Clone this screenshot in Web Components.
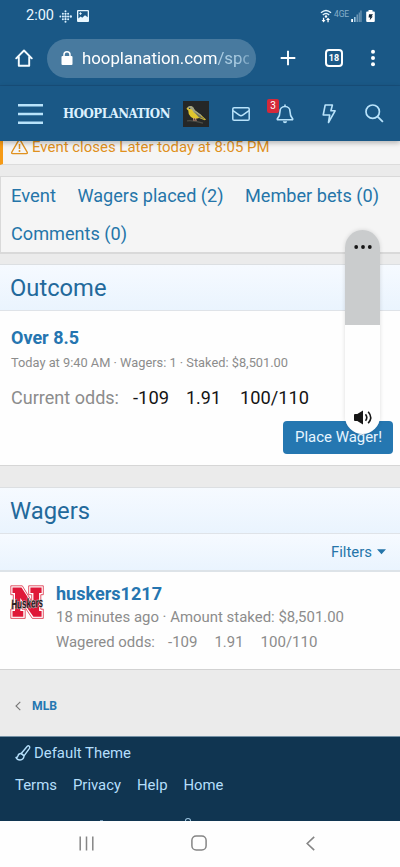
<!DOCTYPE html>
<html lang="en">
<head>
<meta charset="utf-8">
<title>Hooplanation</title>
<style>
html,body{margin:0;padding:0}
body{width:400px;height:867px;overflow:hidden;font-family:Roboto,"Liberation Sans",sans-serif;background:#ebebeb}
</style>
</head>
<body>
<hoop-screen></hoop-screen>
<script>
const ICONS = {
  fitbit: [13,13,'<g fill="#d9f0ff"><circle cx="6.500" cy="1.200" r="1"/><circle cx="6.500" cy="3.800" r="1.100"/><circle cx="6.500" cy="6.500" r="1.200"/><circle cx="6.500" cy="9.200" r="1.100"/><circle cx="6.500" cy="11.800" r="1"/><circle cx="3.900" cy="3.800" r="1"/><circle cx="3.900" cy="6.500" r="1.100"/><circle cx="3.900" cy="9.200" r="1"/><circle cx="9.100" cy="3.800" r="1"/><circle cx="9.100" cy="6.500" r="1.100"/><circle cx="9.100" cy="9.200" r="1"/><circle cx="1.300" cy="6.500" r=".9"/><circle cx="11.800" cy="6.500" r="1.200"/></g>'],
  photo: [12,12,'<path fill="#e9f8ff" fill-rule="evenodd" d="M1 0h10a1 1 0 0 1 1 1v10a1 1 0 0 1-1 1H1a1 1 0 0 1-1-1V1a1 1 0 0 1 1-1ZM1.300 1.300v7.200l2.400-2 1.500 1.200L8 5.200l2.700 2V1.300Z"/><path d="M3.500 2.300v2.600M2.200 3.600h2.600" stroke="#e9f8ff" stroke-width=".9"/>'],
  wifi: [12,14,'<g fill="none" stroke="#e4f6ff" stroke-width="1.400"><path d="M1 3.800q5-4.600 10 0M2.800 6q3.200-3 6.400 0"/></g><circle cx="6" cy="7.500" r="1.200" fill="#fff"/><path d="M3.600 13.500 1.600 11h1.300V8.800h1.300V11h1.300ZM8 8.500l2 2.500H8.700v2.300H7.400V11H6Z" fill="#fff"/>'],
  signal: [11,12,'<path d="M.2 9h1.800v3H.2Z" fill="#fff"/><path d="M3 7h1.600v5H3Z" fill="#9fc8e2"/><path d="M5.500 4.500h1.600V12H5.500ZM7.700 2.500h1.200V12H7.700ZM9.300.5h1.300V12H9.300Z" fill="#6e97b5"/>'],
  battery: [9,12,'<path fill="#fff" d="M2.500 0h4v1.500H8a.8.800 0 0 1 .8.800V11a1 1 0 0 1-1 1H1.200a1 1 0 0 1-1-1V2.300a.8.800 0 0 1 .8-.8h1.500Z"/><path d="M3 4.300h4L5.500 6.500h1.300L3.700 10.300 4.300 7.500H2.600Z" fill="#10273a"/>'],
  home: [18,18,'<path fill="none" stroke="#f4fbff" stroke-width="1.900" stroke-linejoin="round" stroke-linecap="round" d="M1.200 9.300 9 1.500l7.800 7.800M3.800 7.500v9.300h10.400V7.500"/>'],
  lock: [12,14,'<rect x=".5" y="5" width="11" height="9" rx="1" fill="#fff"/><path d="M3 6V3.800a3 3 0 0 1 6 0V6" fill="none" stroke="#fff" stroke-width="1.500"/>'],
  plus: [16,16,'<path d="M8 .7v14.600M.7 8h14.600" stroke="#fff" stroke-width="1.900"/>'],
  dots: [6,18,'<g fill="#fff"><circle cx="3" cy="2.700" r="2"/><circle cx="3" cy="9" r="2"/><circle cx="3" cy="15.300" r="2"/></g>'],
  bars: [25,22,'<path d="M0 2.300h25M0 11h25M0 19.700h25" stroke="#b9e3fb" stroke-width="2.600"/>'],
  bird: [26,26,'<rect width="26" height="26" fill="#252727"/><path d="M4 19.800q6-1 16 2.300" stroke="#4c4d47" stroke-width="1.300" fill="none"/><path d="M3.400 7.700 5 6q3-1.600 5 .3l1.700 3.200 6 4.300 5.300 4.800-1.200.7-5.700-2.200q-4.900 1.800-8.200-1Q4.900 13 5.300 9.500Z" fill="#dfc52e"/><path d="m4.600 6.200q3.100-2.200 5.600.1l1.800 3 7 5.100-2 .9-6.200-3.700-1.800-2.900q-1.400-1.100-3.500-.4Z" fill="#a2a385"/><path d="m10.300 10 6.500 4.400 5.600 4-6.400-2Z" fill="#6d6e5e"/><path d="m12.500 17 .6 3m-2.600-3 .6 3" stroke="#d99a80" stroke-width="1"/><circle cx="6.700" cy="7.300" r=".6" fill="#111"/>'],
  mail: [18,14,'<g fill="none" stroke="#b9e3fb" stroke-width="1.500"><rect x=".8" y=".8" width="16.400" height="12.400" rx="1.300"/><path d="m1 3.600 6.300 4.600q1.700 1.300 3.400 0L17 3.600"/></g>'],
  bell: [18,20,'<path d="M9 .5v2M9 2.500c-3.300 0-5 2.300-5 5 0 4-1.100 5.600-2.500 7.100-.5.600-.2 1.200.5 1.200h14c.7 0 1-.6.500-1.200C15.100 13.100 14 11.500 14 7.500c0-2.700-1.700-5-5-5Z" fill="none" stroke="#b9e3fb" stroke-width="1.600"/><path d="M6.800 17.300h4.400q-.3 2-2.200 2t-2.200-2Z" fill="#b9e3fb"/>'],
  bolt: [14,20,'<path d="M3.200 1h7.200L8.900 6.800h4.200L6.500 18.500 7.700 11H1.200Z" fill="none" stroke="#b9e3fb" stroke-width="1.600" stroke-linejoin="round"/>'],
  search: [19,19,'<circle cx="7.700" cy="7.700" r="6.700" fill="none" stroke="#b9e3fb" stroke-width="1.700"/><path d="m12.600 12.600 5.300 5.300" stroke="#b9e3fb" stroke-width="1.800"/>'],
  warn: [17,16,'<path d="M7.600 1.400.9 13q-.8 1.600.8 1.600h13.600q1.600 0 .8-1.600L9.400 1.400q-.9-1.400-1.800 0Z" fill="none" stroke="#e0911e" stroke-width="1.400"/><path d="M8.500 5v5" stroke="#e0911e" stroke-width="1.500"/><circle cx="8.500" cy="12" r="1" fill="#e0911e"/>'],
  more: [18,4,'<g fill="#161616"><circle cx="2.200" cy="2" r="1.900"/><circle cx="9" cy="2" r="1.900"/><circle cx="15.800" cy="2" r="1.900"/></g>'],
  sound: [18,15,'<path d="M0 4.500 1 4h2.300L9 .5v14L3.300 11H1l-1-.5Z" fill="#161616"/><path d="M11.500 4.200q2.600 3.300 0 6.600M14.200 1.700q5 5.800 0 11.600" fill="none" stroke="#161616" stroke-width="1.600"/>'],
  caret: [9,6,'<path d="M0 .3h9L4.500 5.300Z" fill="#2575a9"/>'],
  huskers: [34,34,'<path d="M.8.800h11.500l9.400 15.500V9.700h-3V.8h14.600v8.900h-2.500v14.500h2.500v9.200h-11L12 18v6.200h3.200v9.200H.8v-9.200h2.500V9.700H.8Z" fill="#fff" stroke="#db2940" stroke-width=".8"/><path d="M2.500 2.500h9L23.400 21V8h-3V2.500h11.200V8h-2.500v18h2.500v5.700h-8.200L10.300 13v13h3v5.700H2.500V26H5V8H2.500Z" fill="#df1838"/><text x="1" y="23" font-family="Liberation Sans" font-style="italic" font-weight="700" font-size="13.500" textLength="32" lengthAdjust="spacingAndGlyphs" fill="#231a1b" stroke="#d9cfd0" stroke-width=".9" paint-order="stroke" transform="rotate(-4 17 18)">Huskers</text>'],
  chevron: [6,10,'<path d="M5.300.8 1 5l4.300 4.200" fill="none" stroke="#777" stroke-width="1.100"/>'],
  brush: [16,16,'<g fill="none" stroke="#b5dffb" stroke-width="1.400" stroke-linejoin="round"><path d="M6.200 8.500 12.300 1.300q1-.9 2 0 .9.900.2 2L9 10.800Z"/><path d="M6.200 8.500q-2.700-.1-3.200 2.300-.3 1.700-2 1.700 1.100 2.500 4 2.500 3.800-.2 4-4.200Z"/></g>'],
  recents: [15,15,'<path d="M1.200.5v14M7.500.5v14M13.800.5v14" stroke="#858585" stroke-width="1.500"/>'],
  square: [16,16,'<rect x=".9" y=".9" width="14.200" height="14.200" rx="4.300" fill="none" stroke="#858585" stroke-width="1.500"/>'],
  back: [9,15,'<path d="M8.200.8 1.200 7.500l7 6.700" fill="none" stroke="#858585" stroke-width="1.600"/>']
};
function define(name, css, html) {
  const template = document.createElement('template');
  template.innerHTML = `<style>:host{display:block;box-sizing:border-box}*{box-sizing:border-box}${css}</style>${html}`;
  customElements.define(name, class extends HTMLElement {
    constructor() {
      super();
      this.attachShadow({mode: 'open'}).append(template.content.cloneNode(true));
    }
  });
}
customElements.define('ui-icon', class extends HTMLElement {
  connectedCallback() {
    if (this.shadowRoot) return;
    const [w, h, body] = ICONS[this.getAttribute('name')];
    this.attachShadow({mode: 'open'}).innerHTML = `<style>:host{display:block;flex:none;width:${w}px;height:${h}px}svg{display:block;overflow:visible}</style><svg width="${w}" height="${h}" viewBox="0 0 ${w} ${h}" aria-hidden="true">${body}</svg>`;
  }
});
/* Single line of text that spans the given width: the size adapts a little, the tracking does the rest. */
customElements.define('ui-line', class extends HTMLElement {
  connectedCallback() {
    if (this.shadowRoot) return;
    this.attachShadow({mode: 'open'}).innerHTML = '<style>:host{display:block;flex:none;white-space:nowrap}span{display:inline-block;vertical-align:top}</style><span><slot></slot></span>';
    const span = this.shadowRoot.querySelector('span');
    const w = +this.getAttribute('w');
    this.style.width = w + 'px';
    const ratio = Math.min(1.06, Math.max(.94, w / span.getBoundingClientRect().width));
    span.style.fontSize = (parseFloat(getComputedStyle(this).fontSize) * ratio).toFixed(2) + 'px';
    span.style.letterSpacing = ((w - span.getBoundingClientRect().width) / this.textContent.length).toFixed(3) + 'px';
  }
});
define('status-bar', `:host{height:32px;display:flex;align-items:center;padding-left:26px;color:#e9f7ff;font-size:14.600px}
.net{font-size:9px;color:#86afca;margin-left:2px;height:14px;line-height:10px}`,
 `<ui-line w="28">2:00</ui-line><ui-icon name="fitbit" style="margin-left:5px"></ui-icon><ui-icon name="photo" style="margin-left:5px"></ui-icon>
 <ui-icon name="wifi" style="margin-left:231px"></ui-icon><ui-line class="net" w="15">4GE</ui-line><ui-icon name="signal" style="margin-left:2px"></ui-icon><ui-icon name="battery" style="margin-left:4px"></ui-icon>`);
define('browser-bar', `:host{height:54px;display:flex;align-items:center;padding:0 0 1px 15px;color:#fff;border-bottom:1px solid #174f7b}
.url{width:209px;height:39px;margin-left:14px;border-radius:20px;background:#487a9f;display:flex;align-items:center;padding-left:14px;font-size:17px}
.clip{width:167px;margin-left:9px;overflow:hidden;-webkit-mask-image:linear-gradient(90deg,#000 155px,#0006 168px)}
.clip span{color:#a9cbe1}
.tabs{width:18px;height:18px;margin-left:29px;border:2px solid #fff;border-radius:4px;font:700 9px/14px Roboto;text-align:center}`,
 `<ui-icon name="home"></ui-icon><div class="url"><ui-icon name="lock"></ui-icon><div class="clip"><ui-line w="170">hooplanation.com<span>/spo</span></ui-line></div></div>
 <ui-icon name="plus" style="margin-left:24px"></ui-icon><div class="tabs">18</div><ui-icon name="dots" style="margin-left:27px"></ui-icon>`);
define('site-nav', `:host{height:55px;display:flex;align-items:center;padding-left:18px;position:relative;z-index:1;background:#1a5886;box-shadow:0 2px 5px #0004}
.logo{font:700 14px "DejaVu Serif Condensed","DejaVu Serif",serif;font-stretch:condensed;color:#dcf1ff;margin-left:20px}
.bell{position:relative;margin-left:26px}
.badge{position:absolute;left:-9px;top:-5px;width:12px;height:14px;background:#d4293a;color:#fff;border-radius:2px;font-size:10px;line-height:14px;text-align:center}`,
 `<ui-icon name="bars"></ui-icon><ui-line class="logo" w="107">HOOPLANATION</ui-line><ui-icon name="bird" style="margin-left:13px"></ui-icon><ui-icon name="mail" style="margin-left:23px"></ui-icon>
 <div class="bell"><ui-icon name="bell"></ui-icon><span class="badge">3</span></div><ui-icon name="bolt" style="margin-left:28px"></ui-icon><ui-icon name="search" style="margin-left:29px"></ui-icon>`);
define('event-notice', `:host{height:24px;background:#f5f5f5;border-left:3px solid #f59a16;border-bottom:1px solid #dcdcdc;display:flex;align-items:flex-start;padding-left:8px;color:#e0911e;font-size:15px;line-height:20px}
ui-line{margin:-4px 0 0 4px}`,
 `<ui-icon name="warn" style="margin-top:-2px"></ui-icon><ui-line w="237.500">Event closes Later today at 8:05 PM</ui-line>`);
define('event-tabs', `:host{height:78px;margin-top:11px;background:#f5f5f5;border:1px solid #d9d9d9;border-right:0;border-bottom-width:2px;padding:0 0 0 10px;display:flex;flex-wrap:wrap;column-gap:21.500px;align-content:flex-start;font-size:18px;line-height:38px;color:#2575a9}`,
 `<ui-line w="45">Event</ui-line><ui-line w="146">Wagers placed (2)</ui-line><ui-line w="134">Member bets (0)</ui-line><ui-line w="116">Comments (0)</ui-line>`);
define('block-header', `:host{height:47px;background:linear-gradient(#f6faff,#eaf4fe);border-top:1px solid #dcdfe2;border-bottom:1px solid #dfe3e8;padding-left:10px;font-size:23.500px;line-height:46px;color:#23699b}`, `<slot></slot>`);
define('outcome-card', `:host{height:155px;background:#fefefe;border-bottom:1px solid #d6d6d6;padding:14px 7px 0 11px;color:#8c8c8c}
.title{font-weight:700;font-size:18px;line-height:26px;color:#2575b0}.meta{font-size:12.500px;line-height:23px}
.odds{display:flex;font-size:18px;line-height:24px;margin-top:12px;color:#141414}.label{color:#8c8c8c}
.btn{width:110px;height:33px;margin:11px 0 0 auto;border-radius:4px;background:#2577b1;color:#e7f5ff;font-size:15px;line-height:32px;padding-left:12px}`,
 `<ui-line class="title" w="68">Over 8.5</ui-line><ui-line class="meta" w="277">Today at 9:40 AM · Wagers: 1 · Staked: $8,501.00</ui-line>
 <div class="odds"><ui-line class="label" w="108">Current odds:</ui-line><ui-line w="36" style="margin-left:14px">-109</ui-line><ui-line w="35" style="margin-left:17px">1.91</ui-line><ui-line w="69" style="margin-left:19px">100/110</ui-line></div>
 <div class="btn"><ui-line w="87">Place Wager!</ui-line></div>`);
define('filter-bar', `:host{height:38px;background:linear-gradient(#f6faff,#eaf4fe);border-bottom:2px solid #dde3e8;display:flex;justify-content:flex-end;align-items:center;padding-right:14px;gap:5px;font-size:15px;color:#2575a9}`,
 `<ui-line w="41">Filters</ui-line><ui-icon name="caret"></ui-icon>`);
define('wager-row', `:host{height:98px;background:#fefefe;border-bottom:1px solid #d2d2d2;display:flex;padding:13px 0 0 10px;color:#8c8c8c;font-size:14.500px}
.info{margin:-4px 0 0 12px}.name{font-weight:700;font-size:18px;line-height:25px;color:#2575b0}.line{line-height:23px;display:block}.row{display:flex;line-height:24px;margin-top:1px}`,
 `<ui-icon name="huskers"></ui-icon><div class="info"><ui-line class="name" w="106">huskers1217</ui-line><ui-line class="line" w="288">18 minutes ago · Amount staked: $8,501.00</ui-line>
 <div class="row"><ui-line w="99">Wagered odds:</ui-line><ui-line w="29.500" style="margin-left:13px">-109</ui-line><ui-line w="29" style="margin-left:17px">1.91</ui-line><ui-line w="57" style="margin-left:17px">100/110</ui-line></div></div>`);
define('bread-crumb', `:host{height:66px;display:flex;align-items:center;padding:6px 0 0 15px;gap:11px;font-weight:700;font-size:11.500px;color:#2577b1}`,
 `<ui-icon name="chevron"></ui-icon><ui-line w="25">MLB</ui-line>`);
define('site-footer', `:host{height:85px;overflow:hidden;background:#103551;border-top:1px solid #7591a5;padding:1px 0 0 15px;color:#b5dffb;font-size:15px;line-height:30px}
.row{display:flex;align-items:center}.links{gap:16px;margin-top:2px}
.peek{display:flex;align-items:flex-start;padding:18px 0 0 85px;gap:82px}.peek i{width:3px;height:1px;background:#6c94b2;margin-top:2px}.peek b{width:6px;height:5px;border:1.500px solid #9fc7e2;border-radius:50%}`,
 `<div class="row"><ui-icon name="brush"></ui-icon><ui-line w="97" style="margin-left:3px">Default Theme</ui-line></div>
 <div class="row links"><ui-line w="42">Terms</ui-line><ui-line w="48">Privacy</ui-line><ui-line w="30.500">Help</ui-line><ui-line w="40">Home</ui-line></div><div class="peek"><i></i><b></b></div>`);
define('phone-keys', `:host{height:46px;background:#fefefe;display:flex;align-items:center;padding:0 0 2px 79px}`,
 `<ui-icon name="recents"></ui-icon><ui-icon name="square" style="margin-left:97px"></ui-icon><ui-icon name="back" style="margin-left:99px"></ui-icon>`);
define('volume-slider', `:host{position:absolute;z-index:3;left:345px;top:230px;width:35px;height:204px;border-radius:18px;background:linear-gradient(#cacccd 0 95.500px,#fefefe 95.500px);box-shadow:0 0 4px #0002;display:flex;flex-direction:column;align-items:center;justify-content:space-between;padding:15px 0 9px}`,
 `<ui-icon name="more"></ui-icon><ui-icon name="sound"></ui-icon>`);
define('hoop-screen', `:host{position:relative;width:400px;height:867px;overflow:hidden;background:#ebebeb}.top{background:#1a5886}`,
 `<div class="top"><status-bar></status-bar><browser-bar></browser-bar></div><site-nav></site-nav><event-notice></event-notice><event-tabs></event-tabs>
 <block-header style="margin-top:10px"><ui-line w="96.500">Outcome</ui-line></block-header><outcome-card></outcome-card>
 <block-header style="margin-top:21px"><ui-line w="80">Wagers</ui-line></block-header><filter-bar></filter-bar><wager-row></wager-row><bread-crumb></bread-crumb><site-footer></site-footer><phone-keys></phone-keys><volume-slider></volume-slider>`);
</script>
</body>
</html>
